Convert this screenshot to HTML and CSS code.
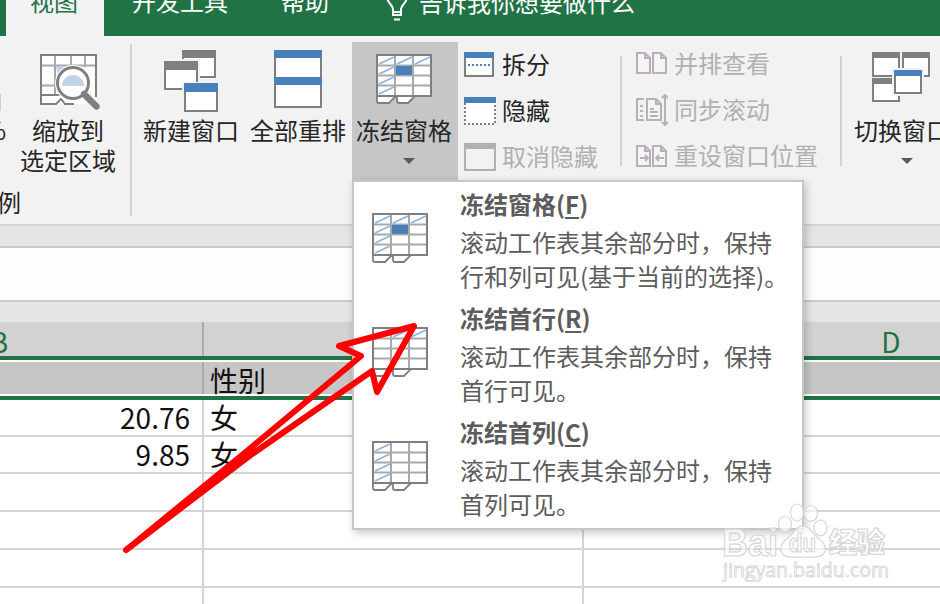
FILE: index.html
```html
<!DOCTYPE html>
<html lang="zh-CN">
<head>
  <meta charset="utf-8">
  <title>Excel</title>
  <link rel="stylesheet" href="styles.css">
</head>
<body>
  <svg width="0" height="0" class="defs">
    <defs>
      <g id="sheet">
        <path d="M1 1h54v41H1z" fill="#fff"/>
        <path d="M1 42v5q0 2 2 2h10l7-7zM21 42v5q0 2 2 2h9l7-7z" fill="#fff" stroke="#7f7f7f" stroke-width="1.8"/>
        <path d="M2 11.500h52M2 21.500h52M2 31.500h52M19 2v40M37 2v40" stroke="#a9a9a9" stroke-width="2"/>
        <path d="M1 1h54v41H1z" fill="none" stroke="#7f7f7f" stroke-width="2"/>
      </g>
      <g id="pages" fill="#f6f2f7" stroke="#b5b1b5" stroke-width="2">
        <path d="M1 1h8l5 5v15H1zM17 1h8l5 5v15H17z"/>
        <path d="M9 1v5h5M25 1v5h5" fill="none"/>
      </g>
    </defs>
  </svg>

  <div class="tabs">
    <div class="tab active">视图</div>
    <div class="tab dev">开发工具</div>
    <div class="tab help">帮助</div>
    <div class="tell">
      <svg width="24" height="32" fill="none" stroke="#fff" stroke-width="2"><path d="M8 23v-3c0-4-6-6-6-12a10 10 0 0 1 20 0c0 6-6 8-6 12v3zM8 23v3h8v-3M9 30.500h6"/></svg>
      <span>告诉我你想要做什么</span>
    </div>
  </div>

  <div class="ribbon">
    <div class="group zoom-group">
      <div class="row">
        <div class="cut"><i></i><span>%</span></div>
        <div class="btn">
          <div class="icon">
            <svg width="62" height="60">
              <path d="M1 2h55v49H1z" fill="#fff"/>
              <path d="M2 12.500h54M2 32.500h18M2 42h20M15 2v40M31 2v12M45 2v12" stroke="#a9a9a9" stroke-width="2"/>
              <path d="M16 13h10l-8 9z" fill="#c0d3e8"/>
              <path d="M56 44V2H1v49h15l5-5 4 5h9" fill="none" stroke="#7f7f7f" stroke-width="2"/>
              <path d="M2 42h16" stroke="#7f7f7f" stroke-width="2"/>
              <circle cx="33" cy="30" r="18" fill="#fff"/>
              <path d="M22 33a11 11 0 0 1 22 0z" fill="#c0d3e8"/>
              <circle cx="33" cy="30" r="15.500" fill="none" stroke="#7f7f7f" stroke-width="3"/>
              <path d="M45 42l12 12" stroke="#f2f2f2" stroke-width="10"/>
              <path d="M44 41l12.500 12.500" stroke="#7f7f7f" stroke-width="6.500" stroke-linecap="round"/>
            </svg>
          </div>
          <span>缩放到<br>选定区域</span>
        </div>
      </div>
      <div class="group-name">例</div>
    </div>

    <div class="btn new-window">
      <div class="icon">
        <svg width="54" height="64" stroke-width="2">
          <path d="M19 2h32v26H19z" fill="#fff" stroke="#7f7f7f"/><path d="M18 1h34v8H18z" fill="#7f7f7f"/>
          <path d="M-2 10h38v31H-2z" fill="#f2f2f2"/>
          <path d="M1 14h32v26H1z" fill="#fff" stroke="#7f7f7f"/><path d="M0 12h34v9H0z" fill="#7f7f7f"/>
          <path d="M18 33h36v30H18z" fill="#f2f2f2"/>
          <path d="M21 36h32v26H21z" fill="#fff" stroke="#7f7f7f"/><path d="M20 34h34v9H20z" fill="#4a80b9"/>
        </svg>
      </div>
      <span>新建窗口</span>
    </div>
    <div class="btn arrange">
      <div class="icon">
        <svg width="48" height="60">
          <path d="M1 2h46v56H1z" fill="#fff" stroke="#7f7f7f" stroke-width="2"/>
          <path d="M0 1h48v8H0zM0 28h48v8H0z" fill="#4a80b9"/>
        </svg>
      </div>
      <span>全部重排</span>
    </div>
    <div class="btn freeze">
      <div class="icon">
        <svg width="56" height="56">
          <g transform="translate(0 4)">
            <use href="#sheet"/>
            <path d="M3 10l15-7M21 10l15-7M39 10l15-7M3 20l15-7M3 30l15-7M3 40l15-7" stroke="#8db4e2" stroke-width="1.800"/>
            <path d="M20 12h16v9H20z" fill="#4a80b9"/>
          </g>
        </svg>
      </div>
      <span>冻结窗格</span>
      <b class="arrow"></b>
    </div>

    <div class="list">
      <div class="item">
        <svg width="32" height="26"><path d="M1 2h28v22H1z" fill="#fff" stroke="#7f7f7f" stroke-width="2"/><path d="M0 0h30v6H0z" fill="#4a80b9"/><path d="M4 13h23" stroke="#4a80b9" stroke-width="2" stroke-dasharray="2"/></svg>
        <span>拆分</span>
      </div>
      <div class="item">
        <svg width="32" height="28"><path d="M1 2h30v25H1z" fill="#fff" stroke="#7f7f7f" stroke-width="2" stroke-dasharray="2"/><path d="M0 0h32v6H0z" fill="#4a80b9"/></svg>
        <span>隐藏</span>
      </div>
      <div class="item off">
        <svg width="32" height="28"><path d="M1 2h30v25H1z" fill="#f2f2f2" stroke="#b1b1b1" stroke-width="2"/><path d="M0 0h32v6H0z" fill="#b1b1b1"/></svg>
        <span>取消隐藏</span>
      </div>
    </div>

    <div class="list side">
      <div class="item off">
        <svg width="32" height="26"><use href="#pages" y="1"/></svg>
        <span>并排查看</span>
      </div>
      <div class="item off">
        <svg width="32" height="32" fill="none" stroke="#b5b1b5" stroke-width="2"><path d="M8 5H1v21h7M4 12h3M4 17h3M4 22h3"/><path d="M11 5h9l5 5v16H11z" fill="#f6f2f7"/><path d="M20 5v5h5M14 15h4M14 18h8M14 22h8M29 2v28M26 4l3-3 3 3M26 28l3 3 3-3"/></svg>
        <span>同步滚动</span>
      </div>
      <div class="item off">
        <svg width="32" height="26"><use href="#pages" y="2"/><path d="M4 15h8M9 12l3 3-3 3M28 15h-8M23 12l-3 3 3 3" fill="none" stroke="#b5b1b5" stroke-width="1.800"/></svg>
        <span>重设窗口位置</span>
      </div>
    </div>

    <div class="btn switch">
      <div class="icon">
        <svg width="58" height="58" stroke-width="2">
          <path d="M1 5h26v22H1zM31 5h26v22H31zM1 31h26v21H1z" fill="#fff" stroke="#7f7f7f"/>
          <path d="M0 3h28v6H0zM30 3h28v6H30zM0 29h28v6H0z" fill="#7f7f7f"/>
          <path d="M20 19h32v28H20z" fill="#f2f2f2"/>
          <path d="M23 23h26v21H23z" fill="#fff" stroke="#7f7f7f"/><path d="M22 21h28v6H22z" fill="#4a80b9"/>
        </svg>
      </div>
      <span>切换窗口</span>
      <b class="arrow"></b>
    </div>
  </div>

  <div class="formula"><div></div></div>

  <div class="grid">
    <div class="r head"><div>B</div><div>C</div><div>D</div></div>
    <div class="r first"><div></div><div>性别</div><div></div></div>
    <div class="r top"><div class="num">20.76</div><div>女</div><div></div></div>
    <div class="r"><div class="num">9.85</div><div>女</div><div></div></div>
    <div class="r"><div></div><div></div><div></div></div>
    <div class="r"><div></div><div></div><div></div></div>
    <div class="r"><div></div><div></div><div></div></div>
    <div class="r"><div></div><div></div><div></div></div>
  </div>

  <div class="menu">
    <div class="entry">
      <svg width="56" height="52"><use href="#sheet"/><path d="M3 10l15-7M21 10l15-7M39 10l15-7M3 20l15-7M3 30l15-7M3 40l15-7" stroke="#8db4e2" stroke-width="1.800"/><path d="M20 12h16v9H20z" fill="#4a80b9"/></svg>
      <div>
        <h3>冻结窗格(<u>F</u>)</h3>
        <p>滚动工作表其余部分时，保持<br>行和列可见(基于当前的选择)。</p>
      </div>
    </div>
    <div class="entry">
      <svg width="56" height="52"><use href="#sheet"/><path d="M3 10l15-7M21 10l15-7M39 10l15-7" stroke="#8db4e2" stroke-width="1.800"/></svg>
      <div>
        <h3>冻结首行(<u>R</u>)</h3>
        <p>滚动工作表其余部分时，保持<br>首行可见。</p>
      </div>
    </div>
    <div class="entry">
      <svg width="56" height="52"><use href="#sheet"/><path d="M3 10l15-7M3 20l15-7M3 30l15-7M3 40l15-7" stroke="#8db4e2" stroke-width="1.800"/></svg>
      <div>
        <h3>冻结首列(<u>C</u>)</h3>
        <p>滚动工作表其余部分时，保持<br>首列可见。</p>
      </div>
    </div>
  </div>

  <!-- red pointer -->
  <svg class="pointer" width="940" height="604">
    <path d="M126 550L250 448.500L361 356L339 346L414 326L377 392L372 371L250 455.500Z" fill="none" stroke="#f00" stroke-width="6" stroke-linejoin="round"/>
    <path d="M126 550L250 448.500V455.500Z" fill="#f00"/>
  </svg>

  <svg class="mark" width="180" height="90">
    <g class="logo">
      <ellipse cx="63" cy="32" rx="6.500" ry="8"/>
      <ellipse cx="75" cy="20.500" rx="6.500" ry="8.500"/>
      <ellipse cx="89" cy="21.500" rx="6.500" ry="8"/>
      <ellipse cx="98.500" cy="36" rx="6.500" ry="8"/>
      <path d="M81 34c-8 0-9 8-15 12s-8 8-7 13c3 8 12 6 22 6s19 2 22-6c1-5-1-9-7-13s-7-12-15-12z"/>
    </g>
    <text class="logo latin" x="0" y="64" textLength="56" lengthAdjust="spacingAndGlyphs">Bai</text>
    <text class="logo du" x="67" y="60" textLength="27" lengthAdjust="spacingAndGlyphs">du</text>
    <text class="logo cn" x="107" y="61">经验</text>
    <text class="logo url" x="1" y="85" textLength="166" lengthAdjust="spacingAndGlyphs">jingyan.baidu.com</text>
  </svg>
</body>
</html>
```
FILE: styles.css
```css
body {
  margin: 0;
  width: 940px;
  height: 604px;
  overflow: hidden;
  position: relative;
  background: #fff;
  color: #262626;
  font: 24px/30px "Noto Sans CJK SC", sans-serif;
  white-space: nowrap;
}

svg {
  display: block;
  flex: none;
}

.defs {
  position: absolute;
}

.tabs {
  display: flex;
  height: 36px;
  overflow: hidden;
  background: #217346;
  color: #fff;
  padding-left: 6px;
  line-height: 26px;
}

.tabs .tab,
.tell span {
  height: 36px;
  margin-top: -12px;
}

.tabs .active {
  width: 96px;
  height: 48px;
  padding-right: 2px;
  background: #f2f2f2;
  color: #217346;
  text-align: center;
}

.tabs .dev {
  margin-left: 28px;
}

.tabs .help {
  margin-left: 53px;
}

.tell {
  display: flex;
  gap: 10px;
  margin-left: 56px;
}

.tell svg {
  margin-top: -11px;
}

.tell span {
  margin-top: -11px;
}

.ribbon {
  display: flex;
  height: 190px;
  box-sizing: border-box;
  padding-top: 6px;
  background: #f2f2f2;
  border-bottom: 2px solid #d2d2d2;
  overflow: hidden;
}

.zoom-group {
  width: 130px;
  height: 172px;
  margin-top: 2px;
  border-right: 2px solid #d2d2d2;
  flex: none;
}

.zoom-group .row {
  display: flex;
  height: 145px;
  margin-top: -2px;
}

.cut {
  width: 6px;
  margin-right: 14px;
  display: flex;
  flex-direction: column;
  align-items: flex-end;
  overflow: hidden;
}

.cut i {
  width: 6px;
  height: 17px;
  margin: 52px 0 4px;
  background: linear-gradient(90deg, #c0d3e8 1px, transparent 1px);
}

.group-name {
  margin-left: -3px;
}

.btn {
  display: flex;
  flex-direction: column;
  align-items: center;
  flex: none;
  height: 138px;
  text-align: center;
}

.btn .icon {
  height: 66px;
  margin-top: 7px;
}

.btn .icon svg {
  overflow: visible;
}

.zoom-group .icon {
  padding: 4px 0 0 6px;
  height: 62px;
}

.new-window {
  margin-left: 11px;
}

.arrange {
  margin-left: 11px;
}

.freeze {
  width: 106px;
  margin-left: 6px;
  background: #c6c6c6;
}

.freeze .icon {
  margin-top: 8px;
  margin-left: -2px;
  height: 65px;
}

.freeze span {
  margin-left: -2px;
}

.arrow {
  border: 6px solid transparent;
  border-top-color: #595959;
  border-bottom: 0;
  margin: 13px 0 0 8px;
}

.list {
  width: 156px;
  margin-left: 6px;
  flex: none;
}

.list .item {
  display: flex;
  align-items: center;
  height: 46px;
}

.list .item span {
  margin: -2px 0 0 6px;
}

.list .off {
  color: #b1b1b1;
}

.side {
  width: 204px;
  height: 110px;
  margin: 14px 0 0;
  padding-left: 14px;
  border: solid #d2d2d2;
  border-width: 0 2px;
}

.side .item:first-child {
  margin-top: -15px;
}

.switch {
  margin-left: 12px;
}

.switch .arrow {
  margin-left: 10px;
}

.switch .icon {
  padding-right: 2px;
}

.formula {
  height: 96px;
  box-sizing: border-box;
  padding: 20px 0;
  background: #e5e5e5;
}

.formula div {
  height: 52px;
  background: #fdfdfd;
  border: solid #cacaca;
  border-width: 2px 0;
}

.grid {
  margin-left: -204px;
  width: 1404px;
  font-size: 28px;
  color: #111;
}

.r {
  display: grid;
  grid-template-columns: 408px 380px 616px;
  height: 38px;
  line-height: 36px;
}

.r.top {
  height: 36px;
  line-height: 35px;
}

.r > div {
  border-right: 2px solid #d4d4d4;
  border-bottom: 2px solid #d4d4d4;
  padding-left: 6px;
}

.r .num {
  text-align: right;
  padding-right: 12px;
}

.r.head {
  height: 34px;
  background: #d2d2d2;
  color: #217346;
  border-bottom: 4px solid #217346;
  line-height: 38px;
  text-align: center;
}

.r.head > div {
  padding: 0;
  border-bottom: 0;
  border-color: #ababab;
  height: 34px;
}

.r.first {
  height: 32px;
  background: #c6c6c6;
  border-top: 2px solid #fff;
  border-bottom: 4px solid #217346;
  box-shadow: inset 0 -2px #fff;
  padding-bottom: 2px;
}

.r.first > div {
  border-bottom: 0;
  border-color: #ababab;
  height: 32px;
}

.menu {
  position: absolute;
  left: 352px;
  top: 180px;
  width: 448px;
  height: 346px;
  background: #fff;
  border: 2px solid #c6c6c6;
  box-shadow: 2px 3px 8px rgba(0, 0, 0, .22);
  color: #5c5c5c;
}

.entry {
  display: flex;
  height: 114px;
  padding-left: 18px;
}

.entry svg {
  margin: 31px 32px 0 0;
}

.entry h3 {
  margin: 5px 0 4px;
  font-size: 24px;
  line-height: 34px;
  font-weight: 700;
}

.entry u {
  text-underline-offset: 3px;
}

.entry p {
  margin: 0;
  line-height: 34px;
}

.pointer {
  position: absolute;
  left: 0;
  top: 0;
}

.mark {
  position: absolute;
  left: 722px;
  top: 492px;
}

.logo {
  fill: #fff;
  fill-opacity: .65;
  stroke: #d6d6d6;
  stroke-width: 1.2;
}

.latin {
  font: 700 38px "Liberation Sans", sans-serif;
}

.du {
  font: 700 25px "Liberation Sans", sans-serif;
}

.cn {
  font: 900 28px "Noto Sans CJK SC", sans-serif;
}

.url {
  font: 20px "Open Sans", sans-serif;
  stroke-width: .9;
}
```
